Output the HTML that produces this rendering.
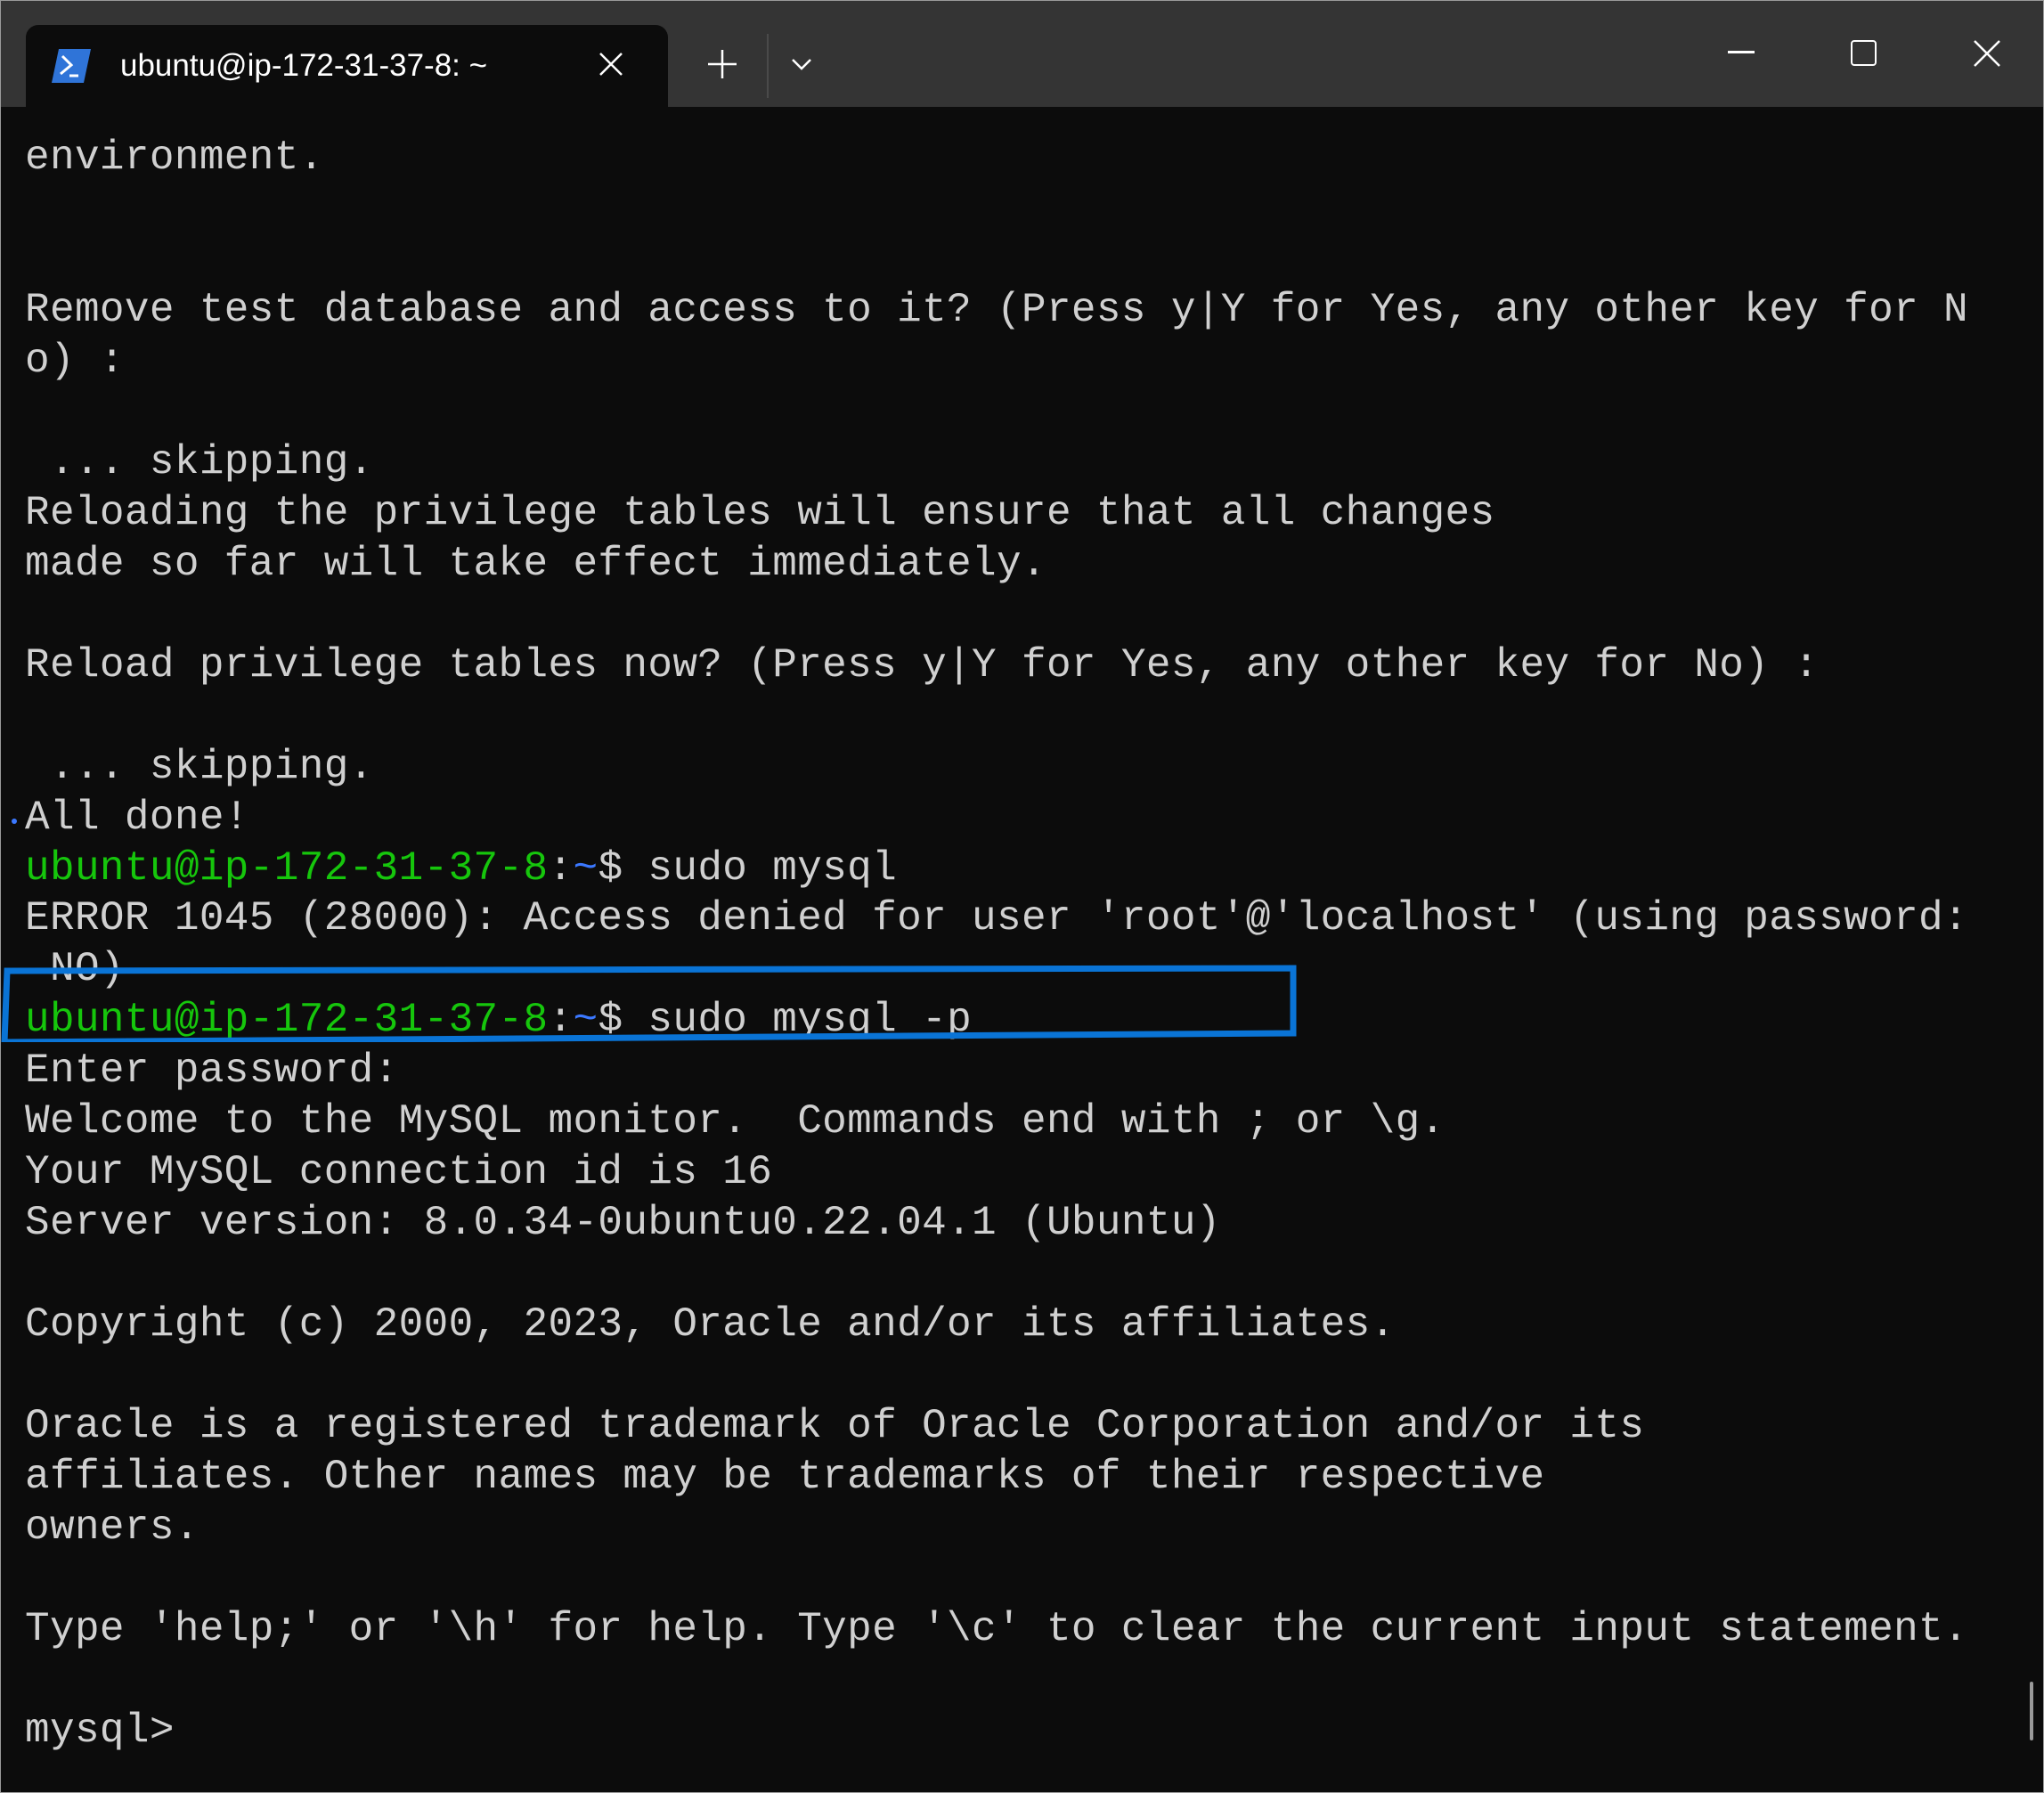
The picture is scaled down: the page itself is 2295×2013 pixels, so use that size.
<!DOCTYPE html>
<html><head><meta charset="utf-8"><style>
html,body{margin:0;padding:0;}
body{width:2295px;height:2013px;background:#0c0c0c;position:relative;overflow:hidden;font-family:"Liberation Mono",monospace;}
#frame{position:absolute;left:0;top:0;width:2293px;height:2011px;border:1px solid #9a9a9a;}
#bar{position:absolute;left:1px;top:1px;width:2293px;height:119px;background:#343434;}
#tab{position:absolute;left:29px;top:28px;width:721px;height:92px;background:#0c0c0c;border-radius:14px 14px 0 0;}
.t{position:absolute;font-family:"Liberation Sans",sans-serif;color:#fff;}
.ln{position:absolute;left:28px;font-size:46px;line-height:57px;color:#d0d0d0;white-space:pre;letter-spacing:0.37px;}
.g{color:#16c60c}.b{color:#3b78ff}
</style></head><body>
<div id="frame"></div>
<div id="bar"></div>
<div id="tab"></div>
<svg style="position:absolute;left:56px;top:53px" width="48" height="42" viewBox="0 0 48 42">
<path d="M10 2 H46 L38 40 H2 Z" fill="#2f74d8"/>
<path d="M14 10 L24 20 L12 30" stroke="#fff" stroke-width="3" fill="none"/>
<path d="M22 32 H32" stroke="#fff" stroke-width="3"/>
</svg>
<div class="t" style="left:135px;top:54px;font-size:35px;">ubuntu@ip-172-31-37-8: ~</div>
<svg style="position:absolute;left:672px;top:58px" width="28" height="28"><path d="M2 2 L26 26 M26 2 L2 26" stroke="#fff" stroke-width="2.5"/></svg>
<svg style="position:absolute;left:795px;top:56px" width="32" height="32"><path d="M16 0 V32 M0 16 H32" stroke="#fff" stroke-width="2.5"/></svg>
<div style="position:absolute;left:861px;top:38px;width:2px;height:72px;background:#4a4a4a"></div>
<svg style="position:absolute;left:888px;top:64px" width="24" height="16"><path d="M2 3 L12 13 L22 3" stroke="#fff" stroke-width="2.5" fill="none"/></svg>
<div style="position:absolute;left:1940px;top:57px;width:30px;height:3px;background:#fff"></div>
<div style="position:absolute;left:2078px;top:45px;width:25px;height:25px;border:2.5px solid #fff;border-radius:4px"></div>
<svg style="position:absolute;left:2215px;top:44px" width="32" height="32"><path d="M2 2 L30 30 M30 2 L2 30" stroke="#fff" stroke-width="2.5"/></svg>

<div class="ln" style="top:149px">environment.</div>
<div class="ln" style="top:320px">Remove test database and access to it? (Press y|Y for Yes, any other key for N</div>
<div class="ln" style="top:377px">o) :</div>
<div class="ln" style="top:491px"> ... skipping.</div>
<div class="ln" style="top:548px">Reloading the privilege tables will ensure that all changes</div>
<div class="ln" style="top:605px">made so far will take effect immediately.</div>
<div class="ln" style="top:719px">Reload privilege tables now? (Press y|Y for Yes, any other key for No) :</div>
<div class="ln" style="top:833px"> ... skipping.</div>
<div class="ln" style="top:890px">All done!</div>
<div style="position:absolute;left:13px;top:919px;width:6px;height:6px;border-radius:3px;background:#3b78ff"></div>
<div class="ln" style="top:947px"><span class="g">ubuntu@ip-172-31-37-8</span>:<span class="b">~</span>$ sudo mysql</div>
<div class="ln" style="top:1003px">ERROR 1045 (28000): Access denied for user 'root'@'localhost' (using password:</div>
<div class="ln" style="top:1060px"> NO)</div>
<div class="ln" style="top:1117px"><span class="g">ubuntu@ip-172-31-37-8</span>:<span class="b">~</span>$ sudo mysql -p</div>
<svg style="position:absolute;left:0;top:1080px" width="1470" height="90"><path d="M8 10 L1452 7 L1452 80 L5 90 Z" stroke="#0a74d6" stroke-width="7" fill="none"/></svg>
<div class="ln" style="top:1174px">Enter password:</div>
<div class="ln" style="top:1231px">Welcome to the MySQL monitor.  Commands end with ; or \g.</div>
<div class="ln" style="top:1288px">Your MySQL connection id is 16</div>
<div class="ln" style="top:1345px">Server version: 8.0.34-0ubuntu0.22.04.1 (Ubuntu)</div>
<div class="ln" style="top:1459px">Copyright (c) 2000, 2023, Oracle and/or its affiliates.</div>
<div class="ln" style="top:1573px">Oracle is a registered trademark of Oracle Corporation and/or its</div>
<div class="ln" style="top:1630px">affiliates. Other names may be trademarks of their respective</div>
<div class="ln" style="top:1687px">owners.</div>
<div class="ln" style="top:1801px">Type 'help;' or '\h' for help. Type '\c' to clear the current input statement.</div>
<div class="ln" style="top:1915px">mysql&gt;</div>
<div style="position:absolute;left:2279px;top:1888px;width:4px;height:66px;border-radius:2px;background:#9a9a9a"></div>
</body></html>
